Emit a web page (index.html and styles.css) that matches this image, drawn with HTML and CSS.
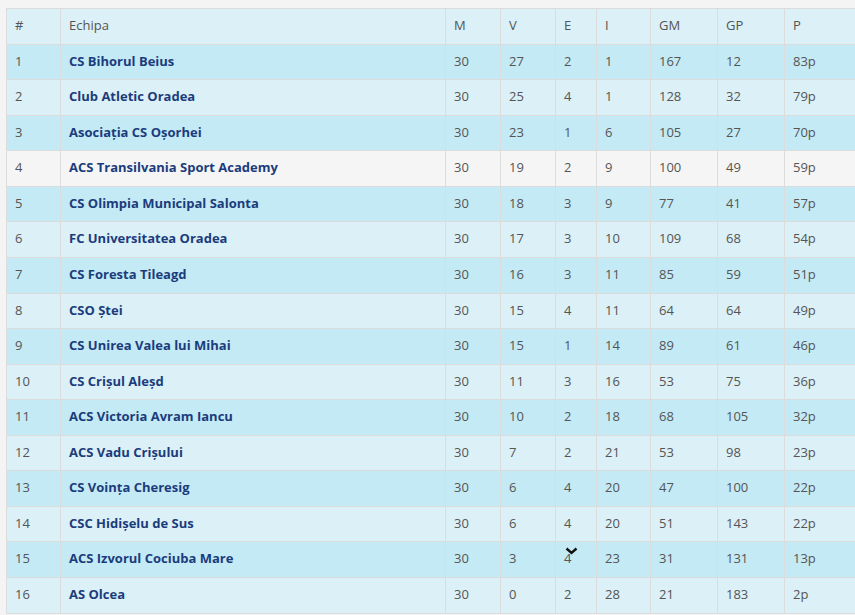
FILE: index.html
```html
<!DOCTYPE html>
<html lang="ro">
<head>
<meta charset="utf-8">
<title>Clasament</title>
<link rel="stylesheet" href="styles.css">
</head>
<body>
<table class="standings">
  <colgroup>
    <col class="c-pos"><col class="c-team"><col class="c-m"><col class="c-v"><col class="c-e"><col class="c-i"><col class="c-gm"><col class="c-gp"><col class="c-p">
  </colgroup>
  <thead>
    <tr><th>#</th><th>Echipa</th><th>M</th><th>V</th><th>E</th><th>I</th><th>GM</th><th>GP</th><th>P</th></tr>
  </thead>
  <tbody>
    <tr class="odd"><td>1</td><td class="team">CS Bihorul Beius</td><td>30</td><td>27</td><td>2</td><td>1</td><td>167</td><td>12</td><td>83p</td></tr>
    <tr class="even"><td>2</td><td class="team">Club Atletic Oradea</td><td>30</td><td>25</td><td>4</td><td>1</td><td>128</td><td>32</td><td>79p</td></tr>
    <tr class="odd"><td>3</td><td class="team">Asociația CS Oșorhei</td><td>30</td><td>23</td><td>1</td><td>6</td><td>105</td><td>27</td><td>70p</td></tr>
    <tr class="hover"><td>4</td><td class="team">ACS Transilvania Sport Academy</td><td>30</td><td>19</td><td>2</td><td>9</td><td>100</td><td>49</td><td>59p</td></tr>
    <tr class="odd"><td>5</td><td class="team">CS Olimpia Municipal Salonta</td><td>30</td><td>18</td><td>3</td><td>9</td><td>77</td><td>41</td><td>57p</td></tr>
    <tr class="even"><td>6</td><td class="team">FC Universitatea Oradea</td><td>30</td><td>17</td><td>3</td><td>10</td><td>109</td><td>68</td><td>54p</td></tr>
    <tr class="odd"><td>7</td><td class="team">CS Foresta Tileagd</td><td>30</td><td>16</td><td>3</td><td>11</td><td>85</td><td>59</td><td>51p</td></tr>
    <tr class="even"><td>8</td><td class="team">CSO Ștei</td><td>30</td><td>15</td><td>4</td><td>11</td><td>64</td><td>64</td><td>49p</td></tr>
    <tr class="odd"><td>9</td><td class="team">CS Unirea Valea lui Mihai</td><td>30</td><td>15</td><td>1</td><td>14</td><td>89</td><td>61</td><td>46p</td></tr>
    <tr class="even"><td>10</td><td class="team">CS Crișul Aleșd</td><td>30</td><td>11</td><td>3</td><td>16</td><td>53</td><td>75</td><td>36p</td></tr>
    <tr class="odd"><td>11</td><td class="team">ACS Victoria Avram Iancu</td><td>30</td><td>10</td><td>2</td><td>18</td><td>68</td><td>105</td><td>32p</td></tr>
    <tr class="even"><td>12</td><td class="team">ACS Vadu Crișului</td><td>30</td><td>7</td><td>2</td><td>21</td><td>53</td><td>98</td><td>23p</td></tr>
    <tr class="odd"><td>13</td><td class="team">CS Voința Cheresig</td><td>30</td><td>6</td><td>4</td><td>20</td><td>47</td><td>100</td><td>22p</td></tr>
    <tr class="even"><td>14</td><td class="team">CSC Hidișelu de Sus</td><td>30</td><td>6</td><td>4</td><td>20</td><td>51</td><td>143</td><td>22p</td></tr>
    <tr class="odd"><td>15</td><td class="team">ACS Izvorul Cociuba Mare</td><td>30</td><td>3</td><td class="has-chev"><svg class="chev" width="13" height="8" viewBox="0 0 13 8"><path d="M1.5 1.5 L6.5 6 L11.5 1.5" fill="none" stroke="#111" stroke-width="2.4"/></svg>4</td><td>23</td><td>31</td><td>131</td><td>13p</td></tr>
    <tr class="even"><td>16</td><td class="team">AS Olcea</td><td>30</td><td>0</td><td>2</td><td>28</td><td>21</td><td>183</td><td>2p</td></tr>
  </tbody>
</table>
</body>
</html>
```

FILE: styles.css
```css
html { overflow: hidden; background: #f4f4f4; }
body {
  margin: 8px 0 0 6px;
  font-family: "Open Sans", "Liberation Sans", sans-serif;
  font-size: 13px;
  line-height: 1.42857143;
  color: #555;
}
.standings {
  border-collapse: collapse;
  table-layout: fixed;
  width: 940px;
  border: 1px solid #dcdcdc;
}
.c-pos { width: 54px; }
.c-team { width: 385px; }
.c-m { width: 55px; }
.c-v { width: 55px; }
.c-e { width: 41px; }
.c-i { width: 54px; }
.c-gm { width: 67px; }
.c-gp { width: 67px; }
.c-p { width: 162px; }
.standings th,
.standings td {
  border: 1px solid #dcdcdc;
  padding: 7px 8px 9px 8px;
  text-align: left;
  vertical-align: top;
  white-space: nowrap;
}
.standings th { font-weight: 400; color: #555; }
.standings thead tr { background: #dbf0f7; }
.odd { background: #c4eaf5; }
.even { background: #dbf0f7; }
.hover { background: #f5f5f5; }
.team { font-weight: 700; color: #1b3c7c; }
.has-chev { position: relative; }
.chev { position: absolute; left: 9px; top: 5px; }
```
